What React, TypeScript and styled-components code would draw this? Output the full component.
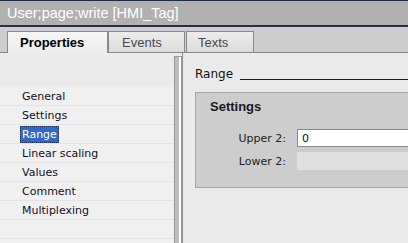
import styled, { createGlobalStyle, css } from "styled-components";

const GlobalStyle = createGlobalStyle`
  html, body {
    margin: 0;
    padding: 0;
    background: #eaeaea;
  }
  #root {
    width: 408px;
    height: 243px;
    overflow: hidden;
  }
`;

const FONT = `"DejaVu Sans", "Liberation Sans", sans-serif`;
const ARIAL = `"Liberation Sans", Arial, sans-serif`;

const Window = styled.div`
  display: flex;
  flex-direction: column;
  width: 408px;
  height: 243px;
  font-family: ${FONT};
  overflow: hidden;
`;

const TitleBar = styled.div`
  height: 24px;
  border-top: 1px solid #222b44;
  border-bottom: 2px solid #262f4a;
  background: #b1b1b1;
  color: #ffffff;
  font-family: ${ARIAL};
  font-size: 14.5px;
  display: flex;
  align-items: center;
  padding-left: 7px;
  white-space: nowrap;
`;

const TabStrip = styled.div`
  height: 25px;
  background: #cdcdcd;
  border-bottom: 1px solid #8a8a8a;
  display: flex;
  align-items: flex-end;
  padding-left: 7px;
`;

const Tab = styled.div<{ active?: boolean; gapLeft?: number }>`
  height: 20px;
  margin-left: ${({ gapLeft }) => gapLeft ?? 0}px;
  border: 1px solid #8a8a8a;
  border-bottom: none;
  display: flex;
  align-items: center;
  font-family: ${ARIAL};
  font-size: 13px;
  color: #4a4a4a;
  background: linear-gradient(#ececec, #dcdcdc);
  ${({ active }) =>
    active &&
    css`
      height: 21px;
      margin-bottom: -1px;
      background: linear-gradient(#f6f6f6, #ececec);
      color: #000000;
      font-weight: bold;
    `}
`;

const TabLabel = styled.span<{ w: number; pl: number }>`
  width: ${({ w }) => w}px;
  padding-left: ${({ pl }) => pl}px;
  box-sizing: border-box;
`;

const Body = styled.div`
  flex: 1;
  display: flex;
  min-height: 0;
`;

const LeftPane = styled.div`
  width: 174px;
  display: flex;
  flex-direction: column;
  background: #f0f0f0;
`;

const LeftHeader = styled.div`
  height: 34px;
  background: #ebebeb;
  flex-shrink: 0;
`;

const NavRow = styled.div`
  height: 18px;
  border-bottom: 1px solid #e4e4e4;
  display: flex;
  align-items: center;
  padding-left: 20px;
  font-size: 11px;
  color: #10102a;
  flex-shrink: 0;
`;

const NavText = styled.span<{ selected?: boolean }>`
  padding: 0 1px;
  line-height: 15px;
  border: 1px dotted transparent;
  ${({ selected }) =>
    selected &&
    css`
      background: #3169c6;
      color: #ffffff;
      border-color: #1b2d55;
    `}
`;

const Splitter = styled.div`
  width: 6px;
  margin-top: 3px;
  border: 1px solid #9a9a9a;
  border-bottom: none;
  background: linear-gradient(90deg, #bdbdbd 0, #bdbdbd 4px, #ffffff 4px);
`;

const RightPane = styled.div`
  flex: 1;
  border-left: 1px solid #8f8f8f;
  background: #eaeaea;
  padding: 13px 0 0 12px;
  display: flex;
  flex-direction: column;
`;

const SectionTitle = styled.div`
  display: flex;
  align-items: flex-end;
  gap: 7px;
  font-size: 12px;
  color: #111;
  height: 15px;
`;

const SectionLine = styled.div`
  flex: 1;
  height: 1px;
  background: #1a1a1a;
  margin-bottom: 1px;
`;

const GroupBox = styled.div`
  margin-top: 11px;
  height: 88px;
  border: 1px solid #a8a8a8;
  border-right: none;
  background: #cdcdcd;
  padding: 6px 0 0 14px;
  display: flex;
  flex-direction: column;
`;

const GroupTitle = styled.div`
  font-family: ${ARIAL};
  font-weight: bold;
  font-size: 13px;
  color: #1a1a1a;
  height: 16px;
`;

const FieldGrid = styled.div`
  margin-top: 14px;
  display: grid;
  grid-template-columns: 76px 1fr;
  column-gap: 11px;
  row-gap: 5px;
`;

const FieldLabel = styled.div`
  font-size: 11px;
  color: #222;
  display: flex;
  align-items: center;
  justify-content: flex-end;
  height: 18px;
`;

const Input = styled.div<{ disabled?: boolean }>`
  height: 18px;
  box-sizing: border-box;
  border: 1px solid #8a8a8a;
  border-right: none;
  background: #ffffff;
  font-size: 11px;
  color: #111;
  display: flex;
  align-items: center;
  padding-left: 4px;
  ${({ disabled }) =>
    disabled &&
    css`
      border-color: transparent;
      background: #dfdfdf;
    `}
`;

const navItems = [
  "General",
  "Settings",
  "Range",
  "Linear scaling",
  "Values",
  "Comment",
  "Multiplexing",
  "",
  "",
];

export default function App() {
  return (
    <Window>
      <GlobalStyle />
      <TitleBar>User;page;write [HMI_Tag]</TitleBar>
      <TabStrip>
        <Tab active>
          <TabLabel w={99} pl={12}>Properties</TabLabel>
        </Tab>
        <Tab>
          <TabLabel w={75} pl={13}>Events</TabLabel>
        </Tab>
        <Tab gapLeft={1}>
          <TabLabel w={66} pl={11}>Texts</TabLabel>
        </Tab>
      </TabStrip>
      <Body>
        <LeftPane>
          <LeftHeader />
          {navItems.map((item, i) => (
            <NavRow key={i}>
              <NavText selected={item === "Range"}>{item}</NavText>
            </NavRow>
          ))}
        </LeftPane>
        <Splitter />
        <RightPane>
          <SectionTitle>
            Range
            <SectionLine />
          </SectionTitle>
          <GroupBox>
            <GroupTitle>Settings</GroupTitle>
            <FieldGrid>
              <FieldLabel>Upper 2:</FieldLabel>
              <Input>0</Input>
              <FieldLabel>Lower 2:</FieldLabel>
              <Input disabled />
            </FieldGrid>
          </GroupBox>
        </RightPane>
      </Body>
    </Window>
  );
}
